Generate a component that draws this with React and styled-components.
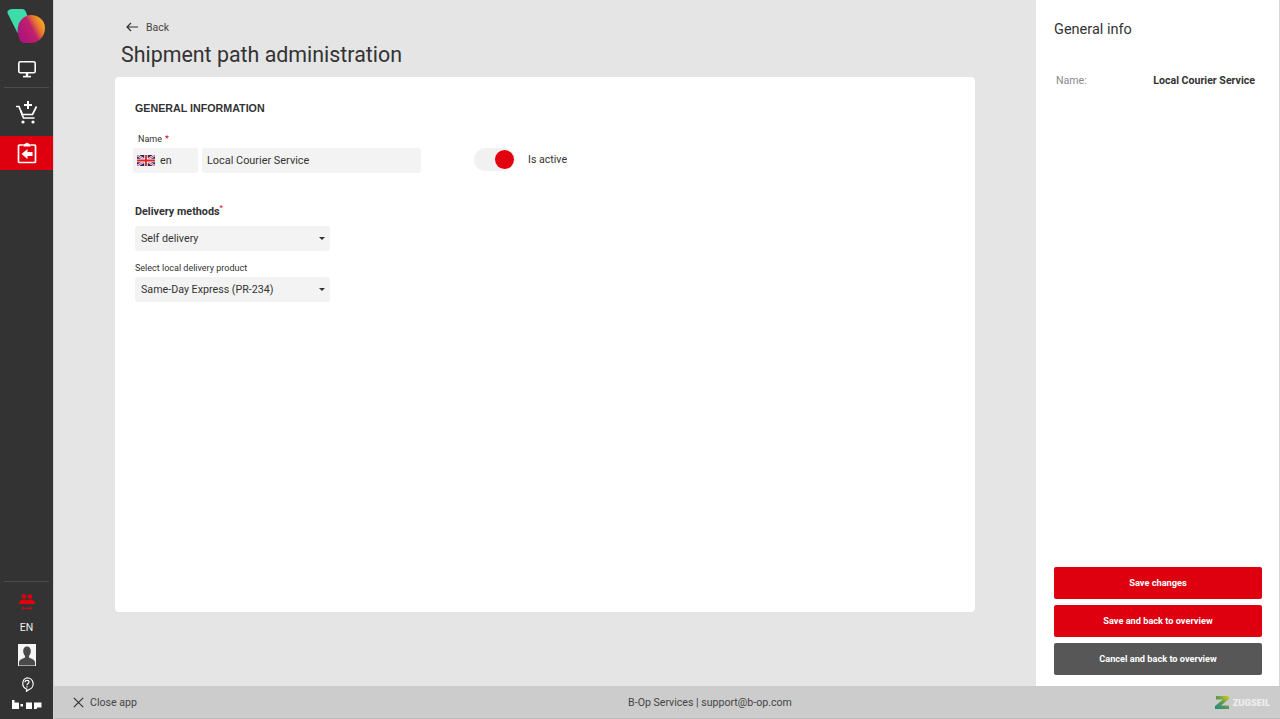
import styled, { createGlobalStyle } from "styled-components";

const GlobalStyle = createGlobalStyle`
    html, body, #root { height: 100%; margin: 0; }
    body {
        font-family: Roboto, "Liberation Sans", sans-serif;
        color: #333;
        background: #e5e5e5;
        overflow: hidden;
    }
    * { box-sizing: border-box; }
`;

const Shell = styled.div`
    display: flex;
    width: 1280px;
    height: 719px;
`;

const Sidebar = styled.nav`
    width: 54px;
    flex: none;
    background: #333333;
    border-right: 1px solid #d2d2d2;
    padding-bottom: 4px;
    display: flex;
    flex-direction: column;
    align-items: stretch;
`;

const LogoCell = styled.div`
    height: 50px;
    display: flex;
    align-items: flex-start;
    padding: 8px 0 0 7px;
`;

const NavItem = styled.div`
    height: ${(p) => p.$h || 34}px;
    margin-top: ${(p) => p.$mt || 0}px;
    flex: none;
    display: flex;
    align-items: center;
    justify-content: center;
    background: ${(p) => (p.$active ? "#df000f" : "transparent")};
    color: #fff;
`;

const SideRule = styled.div`
    height: 1px;
    flex: none;
    margin: ${(p) => p.$m || "0"};
    background: #4c4c4c;
`;

const SideSpacer = styled.div`
    flex: 1;
`;

const LangLabel = styled.div`
    height: 10px;
    flex: none;
    font-size: 10.5px;
    color: #eee;
    display: flex;
    align-items: center;
    justify-content: center;
`;

const Right = styled.div`
    flex: 1;
    display: flex;
    flex-direction: column;
    min-width: 0;
`;

const Top = styled.div`
    height: 686px;
    display: flex;
`;

const Main = styled.main`
    width: 982px;
    padding: 0 61px 0 61px;
`;

const BackRow = styled.div`
    height: 42px;
    padding: 12px 0 0 11px;
    display: flex;
    align-items: center;
    gap: 8px;
    font-size: 10.5px;
    color: #444;
`;

const PageTitle = styled.h1`
    margin: 0;
    height: 35px;
    padding: 0 0 0 6px;
    font-size: 21.4px;
    line-height: 26px;
    font-weight: 400;
    color: #333;
`;

const Card = styled.section`
    width: 860px;
    height: 535px;
    background: #fff;
    border-radius: 4px;
    padding: 25px 20px;
`;

const SectionTitle = styled.h2`
    margin: 0;
    font-family: "Liberation Sans", Arial, sans-serif;
    font-size: 10.7px;
    line-height: 13px;
    font-weight: 700;
    color: #333;
`;

const NameRow = styled.div`
    margin: 19px 0 0 -2px;
    display: flex;
    align-items: flex-end;
`;

const FieldLabel = styled.div`
    font-size: 9px;
    line-height: 11px;
    color: #333;
    padding-left: ${(p) => p.$indent || 0}px;
`;

const Req = styled.span`
    color: #e2000f;
    margin-left: 3px;
`;

const InputGroup = styled.div`
    display: flex;
    gap: 4px;
    margin-top: 3px;
`;

const Fill = styled.div`
    height: 25px;
    background: #f3f3f3;
    border-radius: 3px;
    display: flex;
    align-items: center;
    font-size: 10.7px;
    color: #333;
`;

const LangField = styled(Fill)`
    width: 65px;
    padding-left: 4px;
    gap: 5px;
`;

const NameField = styled(Fill)`
    width: 219px;
    padding-left: 5px;
    font-size: 10.9px;
`;

const Toggle = styled.div`
    margin-left: 53px;
    margin-bottom: 2px;
    display: flex;
    align-items: center;
    gap: 13px;
    font-size: 10.6px;
    color: #333;
`;

const Track = styled.div`
    width: 41px;
    height: 23px;
    border-radius: 12px;
    background: #f1f1f1;
    display: flex;
    align-items: center;
    justify-content: flex-end;
    padding-right: 1px;
`;

const Knob = styled.div`
    width: 19px;
    height: 19px;
    border-radius: 50%;
    background: #e2000f;
`;

const MethodsTitle = styled.div`
    margin-top: 32px;
    font-size: 10.8px;
    line-height: 13px;
    font-weight: 700;
    color: #333;
    sup {
        color: #e2000f;
        font-size: 8px;
        font-weight: 400;
        line-height: 0;
    }
`;

const SelectBox = styled(Fill)`
    width: 195px;
    margin-top: ${(p) => p.$mt || 0}px;
    padding: 0 5px 0 6px;
    justify-content: space-between;
    &::after {
        content: "";
        border-left: 3.5px solid transparent;
        border-right: 3.5px solid transparent;
        border-top: 3.5px solid #333;
    }
`;

const SubLabel = styled.div`
    margin-top: 12px;
    font-size: 9px;
    line-height: 11px;
    color: #333;
`;

const Panel = styled.aside`
    width: 244px;
    background: #fff;
    border-right: 1px solid #d8d8d8;
    padding: 21px 17px 11px 18px;
    display: flex;
    flex-direction: column;
`;

const PanelTitle = styled.div`
    font-size: 14.5px;
    line-height: 18px;
    color: #333;
`;

const InfoRow = styled.div`
    margin-top: 35px;
    padding: 0 7px 0 2px;
    display: flex;
    justify-content: space-between;
    font-size: 10.6px;
    line-height: 13px;
`;

const InfoKey = styled.span`
    color: #8a8a8a;
`;

const InfoValue = styled.span`
    font-weight: 700;
    color: #333;
`;

const Actions = styled.div`
    margin-top: auto;
    display: flex;
    flex-direction: column;
    gap: 6px;
`;

const ActionButton = styled.button`
    height: 32px;
    width: 208px;
    border: 0;
    border-radius: 2px;
    padding: 0 0 2px;
    background: ${(p) => (p.$dark ? "#575757" : "#df000f")};
    color: #fff;
    font-family: inherit;
    font-size: 9.2px;
    font-weight: 700;
`;

const Footer = styled.footer`
    height: 33px;
    background: #cccccc;
    border-bottom: 1px solid #bdbdbd;
    display: grid;
    grid-template-columns: 483px 346px 1fr;
    align-items: center;
    font-size: 10.6px;
    color: #444;
`;

const CloseApp = styled.div`
    display: flex;
    align-items: center;
    gap: 6px;
    padding-left: 19px;
`;

const FooterCenter = styled.div`
    text-align: center;
`;

const FooterBrand = styled.div`
    display: flex;
    justify-content: flex-end;
    align-items: center;
    gap: 4px;
    padding-right: 10px;
    font-size: 9.4px;
    font-weight: 900;
    color: #eeeeee;
`;

function AppLogo() {
    return (
        <svg width="40" height="36" viewBox="0 0 40 36">
            <defs>
                <linearGradient id="blob" x1="0" y1="0.85" x2="1" y2="0.3">
                    <stop offset="0" stopColor="#a9107f" />
                    <stop offset="0.55" stopColor="#c0206c" />
                    <stop offset="0.75" stopColor="#e8752f" />
                    <stop offset="1" stopColor="#f8b020" />
                </linearGradient>
            </defs>
            <path d="M.5 5C0 2 3 1 6 1h9c2 0 3 1 4 3l2 6-9 16-2-2z" fill="#3ddcaa" />
            <path d="M24 7c6 0 14 4 14 13 0 8-6 15-14 15h-6c-2 0-5-1-6-5-1-4-2-8-1-11 1-7 7-12 13-12z" fill="url(#blob)" />
        </svg>
    );
}

function MonitorIcon() {
    return (
        <svg width="20" height="18" viewBox="0 0 20 18" fill="none" stroke="#fff" strokeWidth="1.6">
            <rect x="1.8" y="1.8" width="16.4" height="11" rx="1.6" />
            <path d="M10 13v3" strokeWidth="2.400" />
            <path d="M6 16.600h8" />
        </svg>
    );
}

function CartPlusIcon() {
    return (
        <svg width="24" height="25" viewBox="0 0 24 25" fill="none" stroke="#fff" strokeWidth="1.7">
            <path d="M1 6.500h3l4.500 11.500h11" />
            <path d="M6 10.500l1 4h10.500l4-8" />
            <path d="M13 1v8M9 5h8" strokeWidth="2" />
            <circle cx="8" cy="22" r="1.600" fill="#fff" stroke="none" />
            <circle cx="18" cy="22" r="1.600" fill="#fff" stroke="none" />
        </svg>
    );
}

function ClipboardBackIcon() {
    return (
        <svg width="20" height="22" viewBox="0 0 20 22" fill="none">
            <path d="M6.500 3H2.500a1 1 0 0 0-1 1v15.500a1 1 0 0 0 1 1h15a1 1 0 0 0 1-1V4a1 1 0 0 0-1-1h-4" stroke="#fff" strokeWidth="1.700" />
            <path d="M6.500 4.500V2.500L10 .8l3.500 1.700v2z" fill="#fff" />
            <path d="M4.500 12l6-5v3h5v4h-5v3z" fill="#fff" />
        </svg>
    );
}

function PeopleIcon() {
    return (
        <svg width="16" height="17" viewBox="0 0 16 17" fill="#e2000f">
            <circle cx="5" cy="2.500" r="2.300" />
            <circle cx="11" cy="2.500" r="2.300" />
            <path d="M0 10c0-3 2-4.500 5-4.500 1.200 0 2.200.2 3 .8.8-.6 1.800-.8 3-.8 3 0 5 1.500 5 4.500z" />
            <path d="M4 14.300h8" stroke="#e2000f" strokeWidth="1" fill="none" />
            <path d="M5 12.500l-2.500 1.800 2.500 1.800zM11 12.500l2.500 1.800-2.500 1.800z" />
        </svg>
    );
}

function AvatarIcon() {
    return (
        <svg width="18" height="22" viewBox="0 0 18 22">
            <rect width="18" height="22" fill="#f5f5f5" />
            <path d="M9 2.500c2.500 0 3.800 2 3.800 4.500 0 2-.8 3.800-1.800 4.800v1.700c1 1 5.500 1.500 6 4.500v3.500H1v-3.500c.5-3 5-3.500 6-4.500v-1.700C6 10.800 5.200 9 5.200 7 5.200 4.500 6.500 2.500 9 2.500z" fill="#4a4a4a" />
        </svg>
    );
}

function HelpIcon() {
    return (
        <svg width="14" height="15" viewBox="0 0 14 15" fill="none" stroke="#fff" strokeWidth="1.200">
            <path d="M7 .8a6 6 0 0 1 2 11.700L6.500 14.200l.3-2A6 6 0 0 1 7 .8z" />
            <path d="M5 5.200c0-1.200 1-1.900 2-1.900s2 .7 2 1.800c0 1.500-2 1.500-2 3.100" />
            <path d="M7 9.300v1.200" />
        </svg>
    );
}

function BopLogo() {
    return (
        <svg width="30" height="9" viewBox="0 0 30 9" fill="#fff">
            <path d="M0 0h2.500v2.500H6c.7 0 1 .3 1 1V9H0z" />
            <rect x="8.500" y="4" width="2.500" height="2.500" />
            <rect x="14" y="2.500" width="6" height="6.500" />
            <path d="M22 2.500h7.500V7.500H25V9h-3z" />
        </svg>
    );
}

function UkFlag() {
    return (
        <svg width="18" height="11" viewBox="0 0 18 11">
            <rect width="18" height="11" fill="#26246e" />
            <path d="M0 0l18 11M18 0L0 11" stroke="#fff" strokeWidth="2.200" />
            <path d="M0 0l18 11M18 0L0 11" stroke="#d22" strokeWidth="0.800" />
            <path d="M9 0v11M0 5.500h18" stroke="#fff" strokeWidth="3.400" />
            <path d="M9 0v11M0 5.500h18" stroke="#d22" strokeWidth="1.800" />
        </svg>
    );
}

function BackArrow() {
    return (
        <svg width="12" height="10" viewBox="0 0 12 10" fill="none" stroke="#333" strokeWidth="1.200">
            <path d="M12 5H1M5 1L1 5l4 4" />
        </svg>
    );
}

function CloseIcon() {
    return (
        <svg width="11" height="11" viewBox="0 0 11 11" fill="none" stroke="#333" strokeWidth="1.200">
            <path d="M.8.800l9.400 9.400M10.200.800L.8 10.200" />
        </svg>
    );
}

function ZugseilMark() {
    return (
        <svg width="14" height="13" viewBox="0 0 14 13">
            <defs>
                <linearGradient id="zug" x1="0" y1="1" x2="1" y2="0">
                    <stop offset="0" stopColor="#1f8a8a" />
                    <stop offset="0.5" stopColor="#5a9a50" />
                    <stop offset="1" stopColor="#d8d020" />
                </linearGradient>
            </defs>
            <path d="M1 0h13v3L6 9.500h8V13H0v-3l8-6.500H1z" fill="url(#zug)" />
        </svg>
    );
}

export default function App() {
    return (
        <>
            <GlobalStyle />
            <Shell>
                <Sidebar>
                    <LogoCell><AppLogo /></LogoCell>
                    <NavItem $h={37}><MonitorIcon /></NavItem>
                    <SideRule $m="0 4px" />
                    <NavItem $h={48}><CartPlusIcon /></NavItem>
                    <NavItem $active><ClipboardBackIcon /></NavItem>
                    <SideSpacer />
                    <SideRule $m="0 4px" />
                    <NavItem $h={40}><PeopleIcon /></NavItem>
                    <LangLabel>EN</LangLabel>
                    <NavItem $h={22} $mt={12}><AvatarIcon /></NavItem>
                    <NavItem $h={20} $mt={8}><HelpIcon /></NavItem>
                    <NavItem $h={21}><BopLogo /></NavItem>
                </Sidebar>
                <Right>
                    <Top>
                        <Main>
                            <BackRow><BackArrow />Back</BackRow>
                            <PageTitle>Shipment path administration</PageTitle>
                            <Card>
                                <SectionTitle>GENERAL INFORMATION</SectionTitle>
                                <NameRow>
                                    <div>
                                        <FieldLabel $indent={5}>Name<Req>*</Req></FieldLabel>
                                        <InputGroup>
                                            <LangField><UkFlag />en</LangField>
                                            <NameField>Local Courier Service</NameField>
                                        </InputGroup>
                                    </div>
                                    <Toggle>
                                        <Track><Knob /></Track>
                                        Is active
                                    </Toggle>
                                </NameRow>
                                <MethodsTitle>Delivery methods<sup>*</sup></MethodsTitle>
                                <SelectBox $mt={8}>Self delivery</SelectBox>
                                <SubLabel>Select local delivery product</SubLabel>
                                <SelectBox $mt={3}>Same-Day Express (PR-234)</SelectBox>
                            </Card>
                        </Main>
                        <Panel>
                            <PanelTitle>General info</PanelTitle>
                            <InfoRow>
                                <InfoKey>Name:</InfoKey>
                                <InfoValue>Local Courier Service</InfoValue>
                            </InfoRow>
                            <Actions>
                                <ActionButton>Save changes</ActionButton>
                                <ActionButton>Save and back to overview</ActionButton>
                                <ActionButton $dark>Cancel and back to overview</ActionButton>
                            </Actions>
                        </Panel>
                    </Top>
                    <Footer>
                        <CloseApp><CloseIcon />Close app</CloseApp>
                        <FooterCenter>B-Op Services | support@b-op.com</FooterCenter>
                        <FooterBrand><ZugseilMark />ZUGSEIL</FooterBrand>
                    </Footer>
                </Right>
            </Shell>
        </>
    );
}
